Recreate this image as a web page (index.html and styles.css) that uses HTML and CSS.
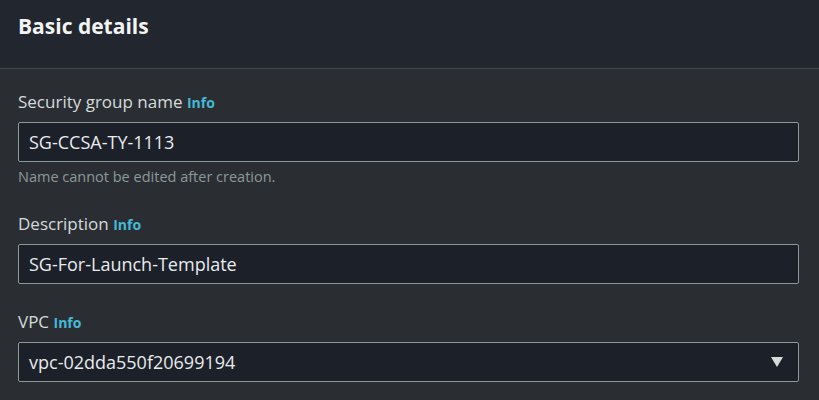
FILE: index.html
```html
<!DOCTYPE html>
<html>
<head>
<meta charset="utf-8">
<link rel="stylesheet" href="styles.css">
</head>
<body>
<div class="panel">
  <div class="header"><h2 class="title">Basic details</h2></div>
  <div class="content">
    <div class="field">
      <div class="label">Security group name <span class="info">Info</span></div>
      <div class="input">SG-CCSA-TY-1113</div>
      <div class="hint">Name cannot be edited after creation.</div>
    </div>
    <div class="field">
      <div class="label">Description <span class="info">Info</span></div>
      <div class="input">SG-For-Launch-Template</div>
    </div>
    <div class="field">
      <div class="label">VPC <span class="info">Info</span></div>
      <div class="input select">
        <span>vpc-02dda550f20699194</span>
        <svg class="caret" width="12" height="10" viewBox="0 0 12 10"><polygon points="0,0 12,0 6,10" fill="#d5dbdb"/></svg>
      </div>
    </div>
  </div>
</div>
</body>
</html>
```
FILE: styles.css
```css
html, body {
  margin: 0;
  padding: 0;
  background: #2a2e33;
}
body {
  font-family: "Open Sans", "Noto Sans", sans-serif;
  color: #d1d5db;
  width: 819px;
  height: 400px;
  overflow: hidden;
}
.panel {
  display: flex;
  flex-direction: column;
}
.header {
  background: #22262e;
  height: 68px;
  border-bottom: 1px solid #414750;
  padding: 0 18px;
  box-sizing: content-box;
}
.title {
  margin: 0;
  padding-top: 12px;
  font-size: 21px;
  line-height: 28px;
  font-weight: 700;
  color: #f2f3f3;
}
.content {
  padding: 22px 20px 0 18px;
  display: flex;
  flex-direction: column;
  gap: 27px;
}
.field {
  display: flex;
  flex-direction: column;
}
.label {
  font-size: 17px;
  line-height: 22px;
  color: #d5dbdb;
  margin-bottom: 8px;
}
.info {
  font-size: 14px;
  font-weight: 700;
  color: #44b9d6;
}
.input {
  height: 40px;
  box-sizing: border-box;
  border: 1px solid #8d9999;
  border-radius: 2px;
  background: #1b2029;
  color: #e9ebed;
  font-size: 18px;
  line-height: 22px;
  padding: 8px 10px;
  display: flex;
  align-items: center;
}
.select {
  justify-content: space-between;
  padding-right: 15px;
}
.hint {
  font-size: 14.5px;
  line-height: 18px;
  color: #8d9999;
  margin-top: 6px;
}
```
